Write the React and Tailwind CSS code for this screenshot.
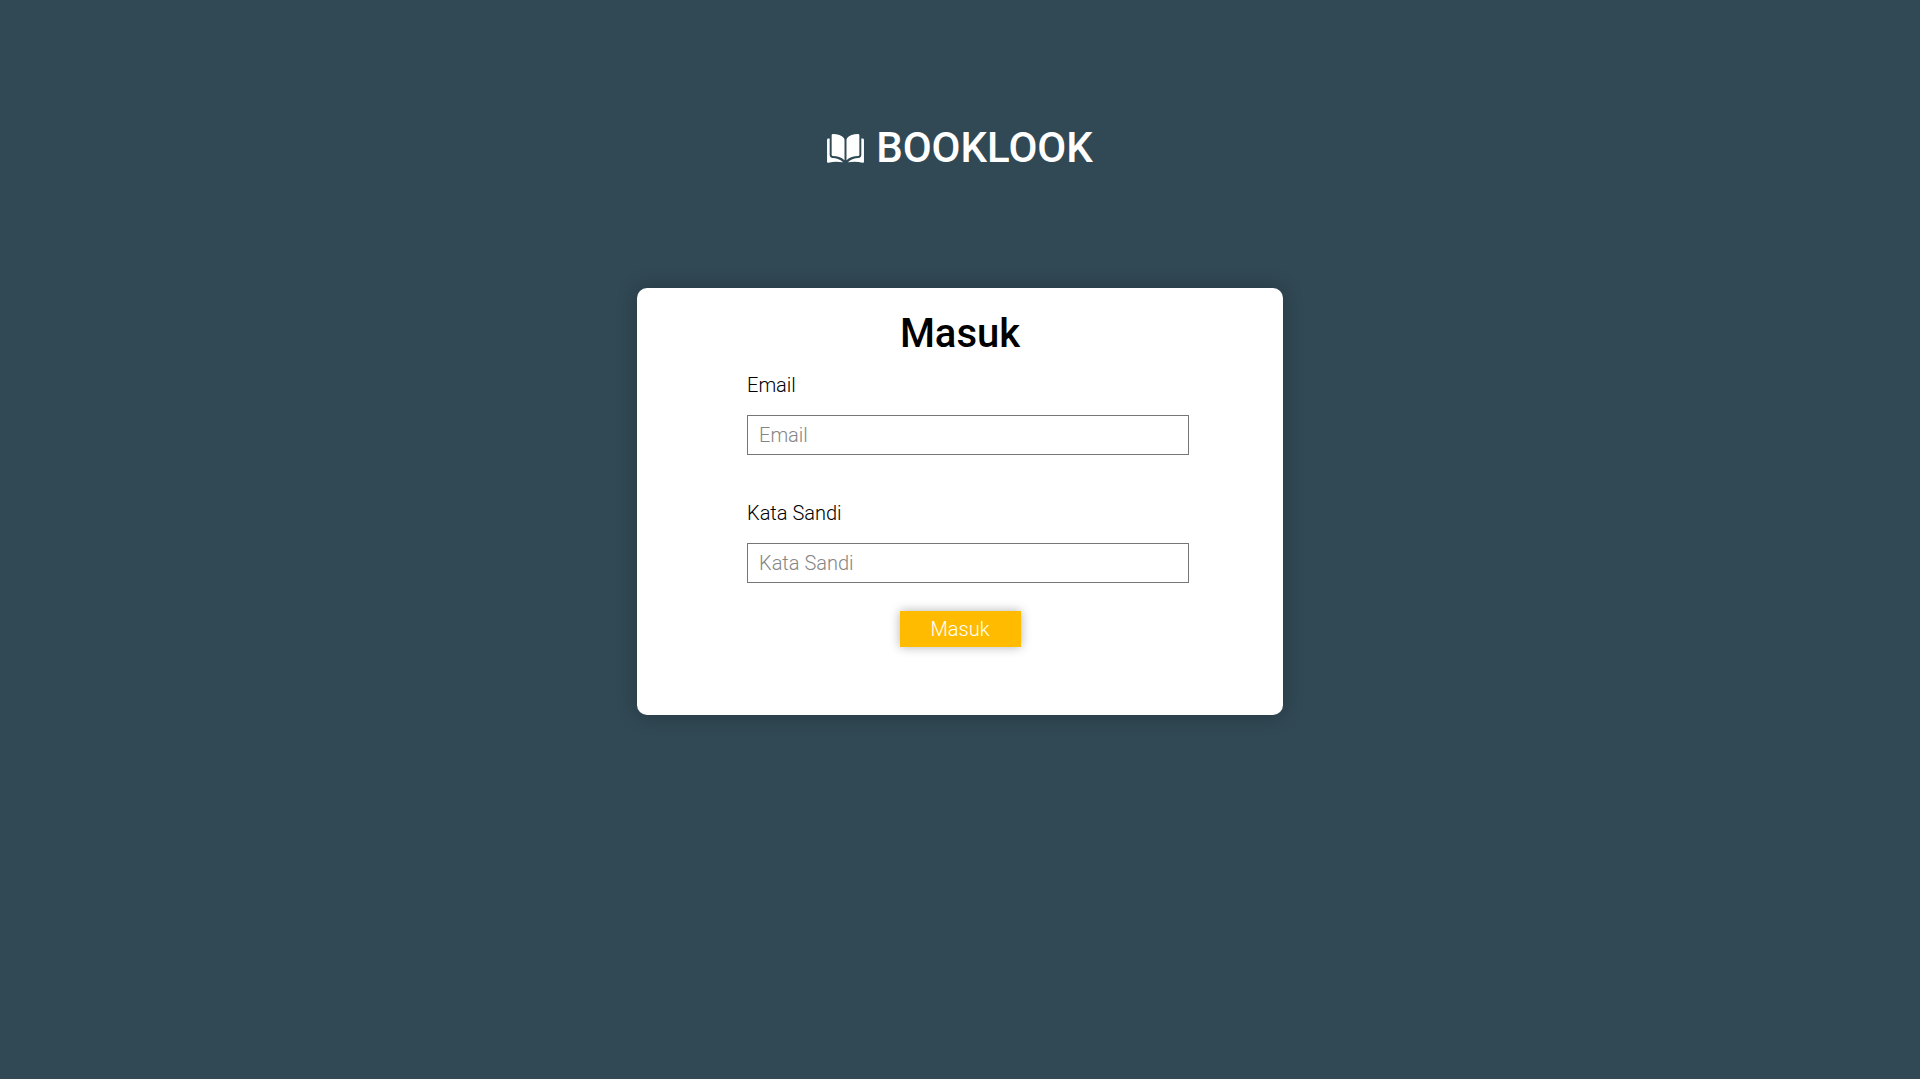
function BookIcon({ className }) {
  return (
    <svg viewBox="0 0 112 88" fill="currentColor" aria-hidden="true" className={className}>
      <path d="M18 0C32 0 45 4 51 12Q53 15 53 19V80C44 70 31 67 18 67Q14 67 14 63V4Q14 0 18 0Z" />
      <path d="M94 0C80 0 67 4 61 12Q59 15 59 19V80C68 70 81 67 94 67Q98 67 98 63V4Q98 0 94 0Z" />
      <path d="M8 14H4Q0 14 0 18V84Q0 88 4 87C19 83 35 83 49 86C39 76 27 73 17 73Q8 72 8 63Z" />
      <path d="M104 14H108Q112 14 112 18V84Q112 88 108 87C93 83 77 83 63 86C73 76 85 73 95 73Q104 72 104 63Z" />
    </svg>
  );
}

function Field({ id, label, type }) {
  return (
    <div className="flex flex-col">
      <label htmlFor={id} className="text-xl leading-6">{label}</label>
      <input
        id={id}
        type={type}
        placeholder={label}
        className="mt-[18px] h-10 w-full border border-[#767676] px-[11px] text-xl font-light text-black placeholder:text-[#858585]"
      />
    </div>
  );
}

export default function App() {
  return (
    <main className="flex min-h-screen flex-col items-center bg-[#314955] font-['Roboto',sans-serif] font-light">
      <header className="mt-[120px] flex items-center gap-3 text-white">
        <BookIcon className="h-[29px] w-[37px]" />
        <span className="text-[42px] font-medium leading-14">BOOKLOOK</span>
      </header>
      <form className="mt-28 flex w-full max-w-[646px] flex-col rounded-[10px] bg-white px-[110px] pt-[18px] pb-[68px] text-black shadow-[0_0_20px_rgba(0,0,0,0.25)]">
        <h1 className="text-center text-[40px] font-medium leading-14">Masuk</h1>
        <div className="mt-[11px] -mr-4 flex flex-col gap-[46px]">
          <Field id="email" label="Email" type="email" />
          <Field id="password" label="Kata Sandi" type="password" />
        </div>
        <button type="button" className="mt-7 h-9 w-[121px] self-center bg-[#ffbb00] text-xl font-light text-white shadow-[0_0_10px_rgba(0,0,0,0.3)]">
          Masuk
        </button>
      </form>
    </main>
  );
}
